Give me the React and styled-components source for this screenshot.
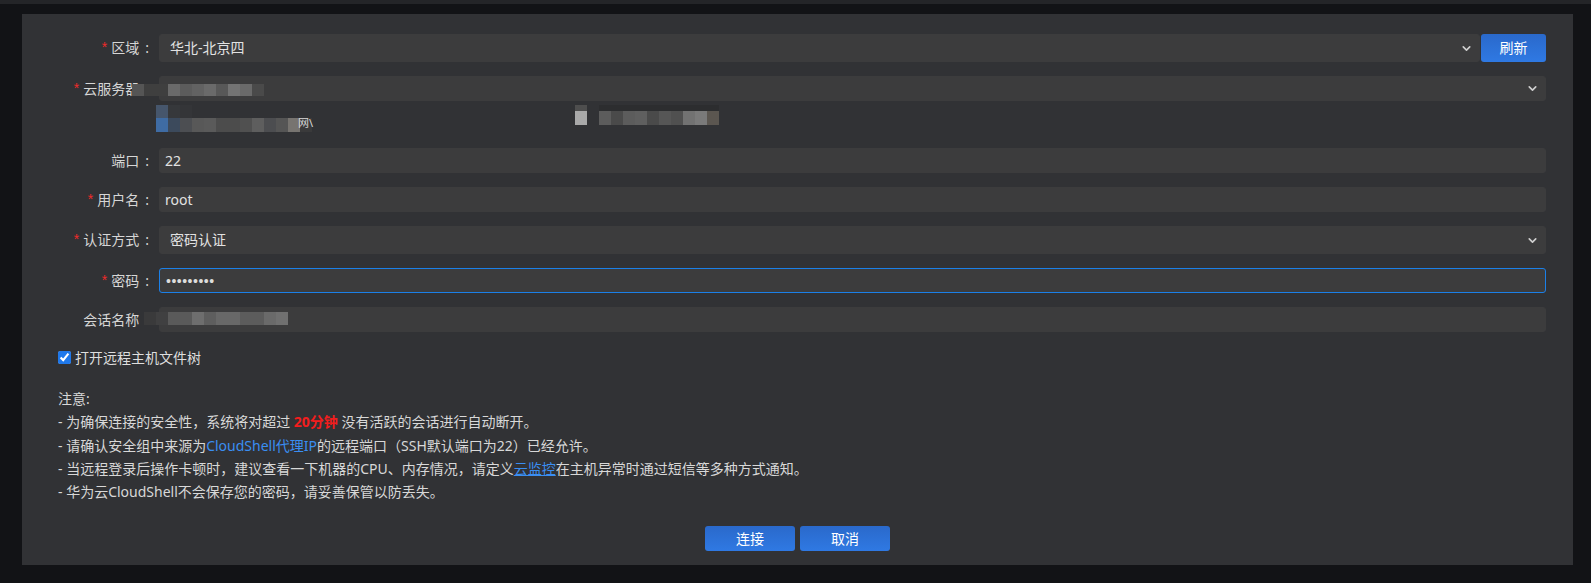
import React from 'react';
import styled, { createGlobalStyle } from 'styled-components';
import { ChevronDown } from 'lucide-react';

const GlobalStyle = createGlobalStyle`
  html, body {
    margin: 0;
    padding: 0;
    background: #121316;
  }
  body {
    font-family: "Noto Sans", "Noto Sans CJK SC", sans-serif;
    font-size: 14px;
    color: #d6d6d6;
  }
  * { box-sizing: border-box; }
`;

const Page = styled.div`
  width: 1591px;
  height: 583px;
  overflow: hidden;
  background: #121316;
  border-top: 4px solid #242528;
  padding: 10px 18px 0 22px;
`;

const Panel = styled.div`
  background: #313235;
  padding: 20px 27px 14px 0;
  display: flex;
  flex-direction: column;
`;

const Form = styled.div`
  display: flex;
  flex-direction: column;
  gap: 14px;
`;

const Row = styled.div`
  position: relative;
  display: grid;
  grid-template-columns: 137px 1fr;
  align-items: start;
`;

const Label = styled.div`
  height: ${p => p.$h}px;
  display: flex;
  align-items: center;
  justify-content: flex-end;
  padding-right: 10px;
  white-space: nowrap;
  color: #d6d6d6;
  line-height: 1;
`;

const Star = styled.span`
  color: #f02a2a;
  font-family: "Liberation Sans", sans-serif;
  font-size: 14px;
  margin-right: 4px;
  position: relative;
  top: -1px;
`;

const Colon = styled.span`
  margin-left: 6px;
  visibility: ${p => (p.$hide ? 'hidden' : 'visible')};
`;

const FieldLine = styled.div`
  display: flex;
  gap: 1px;
`;

const Field = styled.div`
  flex: 1 1 auto;
  min-width: 0;
  height: ${p => p.$h}px;
  display: flex;
  align-items: center;
  justify-content: space-between;
  padding: 0 6px 0 ${p => p.$pl}px;
  background: #3c3c3d;
  border: 1px solid ${p => (p.$focus ? '#1b80e8' : '#3c3c3d')};
  border-radius: 3px;
  color: #e2e2e2;
  line-height: 1;
`;

const Dots = styled.span`
  font-family: "Liberation Sans", sans-serif;
  font-size: 14px;
  letter-spacing: 0.5px;
  color: #dcdcdc;
`;

const BlueButton = styled.button`
  flex: none;
  width: ${p => p.$w}px;
  height: ${p => p.$h}px;
  border: none;
  border-radius: 3px;
  background: linear-gradient(#2a69cb, #2f79e3);
  color: #ffffff;
  font-family: "Noto Sans", "Noto Sans CJK SC", sans-serif;
  font-size: 14px;
  line-height: 1;
  padding: 0;
  cursor: pointer;
`;

const Stack = styled.div`
  display: flex;
  flex-direction: column;
`;

const InfoLine = styled.div`
  margin-top: 4px;
  height: 29px;
  display: flex;
  align-items: flex-start;
`;

const MosaicBox = styled.div`
  display: flex;
  flex-direction: column;
  margin-left: ${p => p.$ml || 0}px;
  ${p => p.$abs && `position: absolute; left: ${p.$x}px; top: ${p.$y}px;`}
`;

const MosaicRow = styled.div`
  display: flex;
`;

const Cell = styled.div`
  width: ${p => p.$w}px;
  height: ${p => p.$h}px;
  background: ${p => p.$c || 'transparent'};
`;

const Smudge = styled.span`
  font-size: 11px;
  color: #d8d8d8;
  margin: 12px 0 0 -14px;
  line-height: 1;
`;

const CheckRow = styled.label`
  margin-top: 15px;
  padding-left: 36px;
  height: 20px;
  display: flex;
  align-items: center;
  gap: 4px;
  color: #dedede;
`;

const Check = styled.input`
  width: 13px;
  height: 13px;
  margin: 0;
  accent-color: #1f78ea;
`;

const Notes = styled.div`
  margin-top: 20px;
  padding-left: 36px;
  line-height: 23.3px;
  color: #d8d8d8;
`;

const Red = styled.span`
  color: #f31d1d;
  font-weight: 700;
`;

const Link = styled.a`
  color: #3a8ef2;
  text-decoration: ${p => (p.$u ? 'underline' : 'none')};
`;

const Actions = styled.div`
  margin-top: 23px;
  padding-left: 27px;
  display: flex;
  justify-content: center;
  gap: 5px;
`;

const Mosaic = ({ rows, w = 12, ml, abs, x, y }) => (
  <MosaicBox $ml={ml} $abs={abs} $x={x} $y={y}>
    {rows.map((r, i) => (
      <MosaicRow key={i}>
        {r.cells.map((c, j) => (
          <Cell key={j} $w={w} $h={r.h} $c={c} />
        ))}
      </MosaicRow>
    ))}
  </MosaicBox>
);

const FormLabel = ({ text, req, h, noColon }) => (
  <Label $h={h}>
    {req && <Star>*</Star>}
    {text}
    <Colon $hide={noColon}>:</Colon>
  </Label>
);

const serverMosaic = [
  { h: 12, cells: ['#555555', '#3f3f3f', '#3f3f3f', '#6a6a6a', '#5c5c5c', '#626262', '#6a6a6a', '#585858', '#747474', '#6a6a6a', '#4a4a4a'] },
];

const blueMosaic = [
  { h: 13, cells: ['#46566c', '#36383b', '#343538'] },
  { h: 14, cells: ['#3f6ca4', '#3c4a5c', '#4c4e52', '#585858', '#5a5a5a', '#4c4c4c', '#4c4c4c', '#505050', '#5e5e5e', '#4c4d50', '#555555', '#777470', '#3a3a3b'] },
];

const rightMosaic = [
  { h: 6, cells: ['#4e4e4e', null, '#2c2d2f', '#2c2d2f', '#2c2d2f', '#2c2d2f', '#2c2d2f', '#2c2d2f', '#2c2d2f', '#2c2d2f', '#2c2d2f', '#2c2d2f'] },
  { h: 14, cells: ['#a9a9a9', null, '#5c5c5c', '#4a4a4a', '#5c5c5c', '#5f5f5f', '#4a4a4a', '#565656', '#505050', '#727272', '#7a7a7a', '#5b5650'] },
];

const sessionMosaic = [
  { h: 13, cells: ['#3a3a3b', '#404041', '#5a5a5a', '#5a5a5a', '#6e6e6e', '#5e5e5e', '#686868', '#686868', '#5c5c5c', '#5c5c5c', '#6a6a6a', '#707070'] },
];

const Chevron = () => <ChevronDown size={13} strokeWidth={3} color="#cfcfcf" />;

export default function App() {
  return (
    <>
      <GlobalStyle />
      <Page>
        <Panel>
          <Form>
            <Row>
              <FormLabel text="区域" req h={28} />
              <FieldLine>
                <Field $h={28} $pl={10}>
                  华北-北京四
                  <Chevron />
                </Field>
                <BlueButton $w={65} $h={28}>刷新</BlueButton>
              </FieldLine>
            </Row>

            <Row>
              <FormLabel text="云服务器" req h={25} noColon />
              <Stack>
                <Field $h={25} $pl={10}>
                  <span />
                  <Chevron />
                </Field>
                <InfoLine>
                  <Mosaic rows={blueMosaic} ml={-3} />
                  <Smudge>网\</Smudge>
                  <Mosaic rows={rightMosaic} ml={262} />
                </InfoLine>
              </Stack>
              <Mosaic rows={serverMosaic} abs x={110} y={8} />
            </Row>

            <Row>
              <FormLabel text="端口" h={25} />
              <Field $h={25} $pl={5}>22</Field>
            </Row>

            <Row>
              <FormLabel text="用户名" req h={25} />
              <Field $h={25} $pl={5}>root</Field>
            </Row>

            <Row>
              <FormLabel text="认证方式" req h={28} />
              <Field $h={28} $pl={10}>
                密码认证
                <Chevron />
              </Field>
            </Row>

            <Row>
              <FormLabel text="密码" req h={25} />
              <Field $h={25} $pl={6} $focus>
                <Dots>•••••••••</Dots>
              </Field>
            </Row>

            <Row>
              <FormLabel text="会话名称" h={25} noColon />
              <Field $h={25} $pl={5} />
              <Mosaic rows={sessionMosaic} abs x={122} y={5} />
            </Row>
          </Form>

          <CheckRow>
            <Check type="checkbox" defaultChecked />
            打开远程主机文件树
          </CheckRow>

          <Notes>
            <div>注意:</div>
            <div>- 为确保连接的安全性，系统将对超过 <Red>20分钟</Red> 没有活跃的会话进行自动断开。</div>
            <div>- 请确认安全组中来源为<Link>CloudShell代理IP</Link>的远程端口（SSH默认端口为22）已经允许。</div>
            <div>- 当远程登录后操作卡顿时，建议查看一下机器的CPU、内存情况，请定义<Link $u>云监控</Link>在主机异常时通过短信等多种方式通知。</div>
            <div>- 华为云CloudShell不会保存您的密码，请妥善保管以防丢失。</div>
          </Notes>

          <Actions>
            <BlueButton $w={90} $h={25}>连接</BlueButton>
            <BlueButton $w={90} $h={25}>取消</BlueButton>
          </Actions>
        </Panel>
      </Page>
    </>
  );
}
